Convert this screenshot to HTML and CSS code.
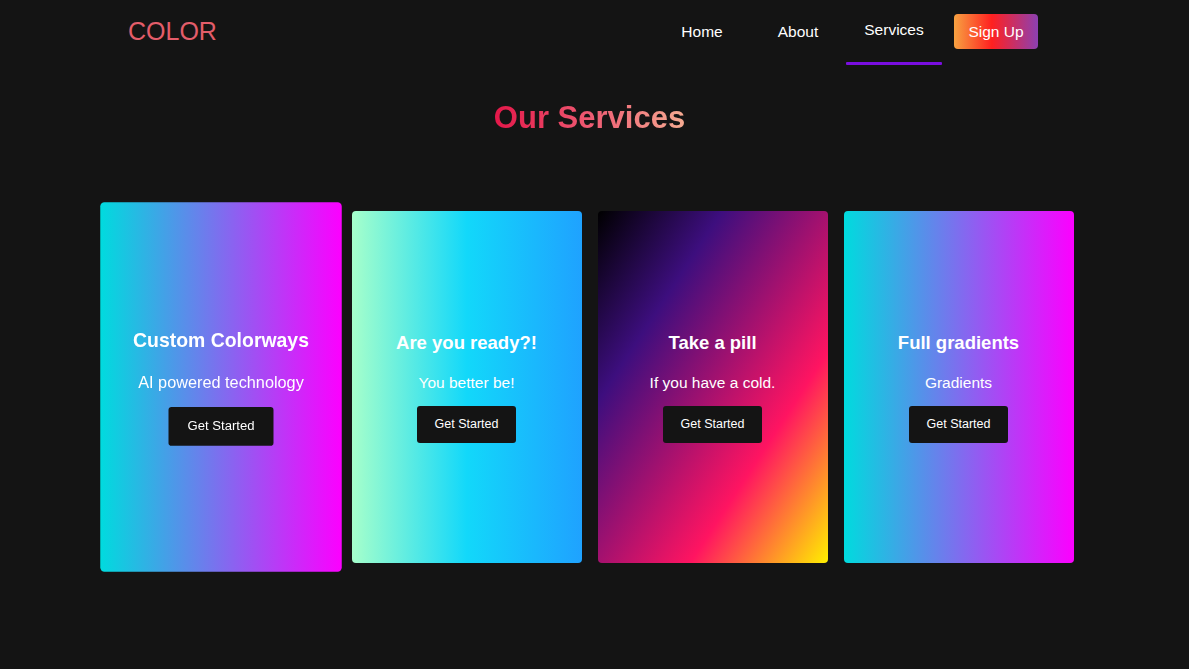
FILE: index.html
```html
<!DOCTYPE html>
<html lang="en">
<head>
<meta charset="utf-8">
<title>COLOR - Our Services</title>
<link rel="stylesheet" href="styles.css">
</head>
<body>
<header class="header">
  <a class="logo" href="#">COLOR</a>
  <nav class="nav">
    <a class="nav-link" href="#">Home</a>
    <a class="nav-link" href="#">About</a>
    <a class="nav-link active" href="#">Services</a>
    <a class="signup" href="#">Sign Up</a>
  </nav>
</header>
<main class="main">
  <h2 class="title">Our Services</h2>
  <section class="cards">
    <div class="card card-1 hovered">
      <h3 class="card-title">Custom Colorways</h3>
      <p class="card-text">AI powered technology</p>
      <button class="card-btn">Get Started</button>
    </div>
    <div class="card card-2">
      <h3 class="card-title">Are you ready?!</h3>
      <p class="card-text">You better be!</p>
      <button class="card-btn">Get Started</button>
    </div>
    <div class="card card-3">
      <h3 class="card-title">Take a pill</h3>
      <p class="card-text">If you have a cold.</p>
      <button class="card-btn">Get Started</button>
    </div>
    <div class="card card-4">
      <h3 class="card-title">Full gradients</h3>
      <p class="card-text">Gradients</p>
      <button class="card-btn">Get Started</button>
    </div>
  </section>
</main>
</body>
</html>
```
FILE: styles.css
```css
* { box-sizing: border-box; }
html, body { margin: 0; padding: 0; }
body {
  background: #141414;
  font-family: "Liberation Sans", Arial, sans-serif;
  color: #fff;
  height: 669px;
  overflow: hidden;
}
.header {
  display: flex;
  align-items: center;
  justify-content: space-between;
  height: 64px;
  padding: 0 151px 0 128px;
}
.logo {
  color: #e35d6a;
  font-size: 25px;
  text-decoration: none;
  line-height: 30px;
  margin-top: -2px;
}
.nav {
  display: flex;
  align-items: center;
  height: 64px;
}
.nav-link {
  position: relative;
  display: block;
  width: 96px;
  height: 64px;
  line-height: 64px;
  text-align: center;
  color: #fff;
  font-size: 15.5px;
  text-decoration: none;
}
.nav-link.active { transform: translateY(-2px); }
.nav-link.active::after {
  content: "";
  position: absolute;
  left: 0;
  right: 0;
  bottom: -3px;
  height: 3px;
  background: #7a0ee0;
  border-radius: 1px;
}
.signup {
  margin-left: 12px;
  margin-top: -2px;
  width: 84px;
  height: 35px;
  line-height: 35px;
  text-align: center;
  border-radius: 4px;
  color: #fff;
  font-size: 15.5px;
  text-decoration: none;
  background: linear-gradient(to right, #f7a241, #ff2020 45%, #8c40b2);
}
.main {
  padding-right: 10px;
  text-align: center;
}
.title {
  margin: 36px 0 0;
  font-size: 31px;
  line-height: 36px;
  font-weight: bold;
  display: inline-block;
  background: linear-gradient(to right, #e41749, #ee5a72 50%, #f6ab92);
  -webkit-background-clip: text;
  background-clip: text;
  color: transparent;
}
.cards {
  display: flex;
  justify-content: center;
  gap: 16px;
  margin-top: 75px;
}
.card {
  width: 230px;
  height: 352px;
  border-radius: 4px;
  display: flex;
  flex-direction: column;
  align-items: center;
  justify-content: center;
}
.hovered { transform: scale(1.05); }
.card-1, .card-4 { background: linear-gradient(to right, #00dbde, #fc00ff); }
.card-2 { background: linear-gradient(to right, #a6ffcb, #12d8fa 50%, #1fa2ff); }
.card-3 { background: linear-gradient(to bottom right, #000000, #3d0e7e 27%, #ff1461 70%, #fff000); }
.card-title {
  margin: 0;
  font-size: 18.5px;
  line-height: 21px;
  font-weight: bold;
  color: #fff;
}
.card-text {
  margin: 21px 0 15px;
  font-size: 15.5px;
  line-height: 17px;
  color: #fff;
}
.card-btn {
  height: 37px;
  padding: 0 18px;
  border: none;
  border-radius: 3px;
  background: #141414;
  color: #fff;
  font-family: "Liberation Sans", Arial, sans-serif;
  font-size: 12.5px;
  cursor: pointer;
}
```
